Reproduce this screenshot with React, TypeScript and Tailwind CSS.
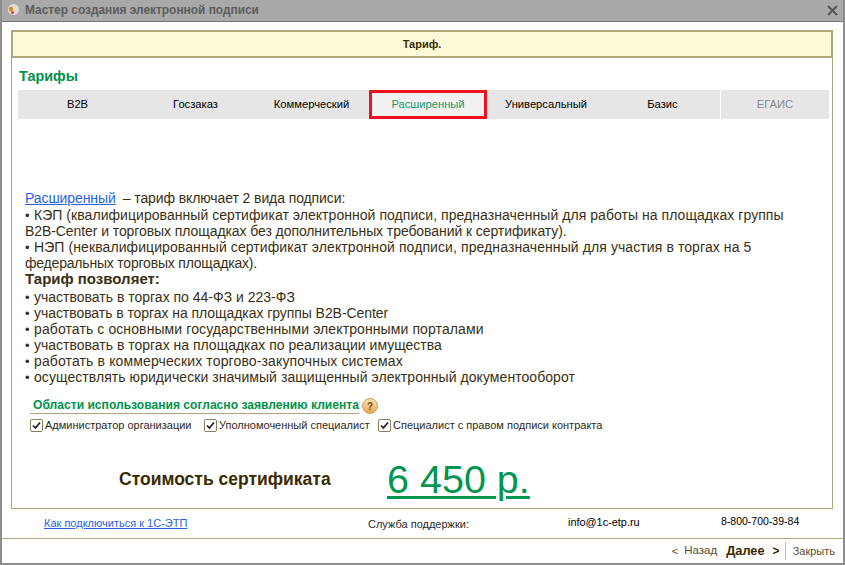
import React from "react";

const FONT = "font-['Liberation_Sans',Arial,sans-serif]";

const tabs = [
  { label: "B2B", w: "w-[119px]" },
  { label: "Госзаказ", w: "w-[117px]" },
  { label: "Коммерческий", w: "w-[115px]" },
  { label: "Расширенный", w: "w-[118px]", active: true },
  { label: "Универсальный", w: "w-[118px]" },
  { label: "Базис", w: "w-[115px]" },
  { label: "ЕГАИС", w: "w-[109px]", disabled: true },
];

const CheckItem = ({ label, w }: { label: string; w: string }) => (
  <div className={`flex items-center gap-[2px] ${w}`}>
    <span className="flex h-[13px] w-[13px] items-center justify-center rounded-[2px] border border-[#8a805c] bg-white">
      <svg width="9" height="9" viewBox="0 0 9 9">
        <path d="M1 4.5 L3.4 7 L8 1.5" fill="none" stroke="#222" strokeWidth="1.8" />
      </svg>
    </span>
    <span className="text-[11px] leading-[13px] text-[#2d2a1e]">{label}</span>
  </div>
);

const Line = ({ children, className = "", bullet }: { children: React.ReactNode; className?: string; bullet?: boolean }) => (
  <p className={className}>
    {bullet && <span className="inline-block w-[9px] text-[13px] leading-[11px]">•</span>}
    {children}
  </p>
);

const App = () => {
  return (
    <div className={`${FONT} flex h-[565px] w-[845px] flex-col overflow-hidden border-2 border-t-0 border-[#8c8c8c] bg-white`}>
      {/* title bar */}
      <div className="flex h-[22px] shrink-0 items-center justify-between border-b border-[#777] bg-[#a9a9a9] pl-[4px] pr-[5px]">
        <div className="flex items-center gap-[5px]">
          <svg width="14" height="14" viewBox="0 0 14 14">
            <circle cx="7.5" cy="6.5" r="5.5" fill="#e2ddd2" />
            <circle cx="5" cy="6" r="2.2" fill="#e08a25" />
            <circle cx="6.5" cy="9.5" r="1.5" fill="#d0452f" />
          </svg>
          <span className="text-[11.9px] font-bold text-[#5c5c5c]">Мастер создания электронной подписи</span>
        </div>
        <svg width="11" height="11" viewBox="0 0 11 11">
          <path d="M1 1 L10 10 M10 1 L1 10" stroke="#555" strokeWidth="2" />
        </svg>
      </div>

      {/* main panel */}
      <div className="ml-[9px] mr-[10px] mt-[8px] flex h-[479px] shrink-0 flex-col border border-[#b0a67c]">
        <div className="flex h-[27px] shrink-0 items-center justify-center border-x border-t border-b-2 border-[#b0a67c] bg-[#fdfad9] text-[11px] font-bold text-[#3a2a00]">
          Тариф.
        </div>

        <div className="pl-[7px] pt-[11px] text-[14.4px] font-bold leading-[15px] text-[#00924a]">Тарифы</div>

        <div className="ml-[6px] mt-[6px] flex h-[29px] w-[811px] shrink-0 bg-[#e6e6e6]">
          {tabs.map((t) => (
            <div
              key={t.label}
              className={`flex shrink-0 items-center justify-center text-[11.2px] ${t.w} ${
                t.active
                  ? "border-[3px] border-[#ee1122] bg-[#f1f1f1] text-[#1a9a70]"
                  : t.disabled
                    ? "border-l border-white text-[#8a8a8a]"
                    : "text-black"
              }`}
            >
              {t.label}
            </div>
          ))}
        </div>

        <div className="ml-[13px] mt-[71px] w-[800px] text-[14px] leading-[16px] text-[#3a2f12]">
          <p className="mb-[1px]">
            <a className="tracking-[-0.08px] text-[#2a5fe0] underline">Расширенный</a>
            <span className="ml-[7px] tracking-[-0.1px]">– тариф включает 2 вида подписи:</span>
          </p>
          <Line bullet className="tracking-[0.05px]">КЭП (квалифицированный сертификат электронной подписи, предназначенный для работы на площадках группы</Line>
          <Line className="tracking-[-0.08px]">B2B-Center и торговых площадках без дополнительных требований к сертификату).</Line>
          <Line bullet className="tracking-[0.09px]">НЭП (неквалифицированный сертификат электронной подписи, предназначенный для участия в торгах на 5</Line>
          <Line className="tracking-[-0.2px]">федеральных торговых площадках).</Line>
          <Line className="mb-[2px] text-[15px] font-bold">Тариф позволяет:</Line>
          <Line bullet>участвовать в торгах по 44-ФЗ и 223-ФЗ</Line>
          <Line bullet className="tracking-[-0.06px]">участвовать в торгах на площадках группы B2B-Center</Line>
          <Line bullet className="tracking-[0.1px]">работать с основными государственными электронными порталами</Line>
          <Line bullet>участвовать в торгах на площадках по реализации имущества</Line>
          <Line bullet className="tracking-[0.13px]">работать в коммерческих торгово-закупочных системах</Line>
          <Line bullet className="tracking-[0.06px]">осуществлять юридически значимый защищенный электронный документооборот</Line>
        </div>

        <div className="ml-[18px] mt-[13px] flex items-center gap-[3px]">
          <span className="border-b border-[#b0a67c] pl-[3px] pb-[1px] text-[12.1px] font-bold leading-[14px] text-[#00924a]">
            Области использования согласно заявлению клиента
          </span>
          <span className="flex h-[16px] w-[16px] items-center justify-center rounded-full border border-[#c9a060] bg-gradient-to-b from-[#fbe3b0] to-[#eba84a] text-[10px] font-bold text-[#7a4a18]">
            ?
          </span>
        </div>

        <div className="ml-[18px] mt-[5px] flex">
          <CheckItem label="Администратор организации" w="w-[174px]" />
          <CheckItem label="Уполномоченный специалист" w="w-[174px]" />
          <CheckItem label="Специалист с правом подписи контракта" w="w-[240px]" />
        </div>

        <div className="ml-[107px] mt-[26px] flex items-center">
          <span className="w-[268px] text-[17.5px] font-bold text-[#3a2a00]">Стоимость сертификата</span>
          <span className="text-[39.5px] leading-[42px] text-[#00964f] underline decoration-[3px] underline-offset-[3px]">6 450 р.</span>
        </div>
      </div>

      {/* support row */}
      <div className="flex h-[29px] shrink-0 items-center text-[11px]">
        <a className="ml-[42px] w-[324px] text-[#2a5fe0] underline">Как подключиться к 1С-ЭТП</a>
        <span className="w-[200px] pt-[1px] text-[#2d2a1e]">Служба поддержки:</span>
        <span className="w-[153px] pb-[3px] text-[10.9px] text-black">info@1c-etp.ru</span>
        <span className="pb-[3px] text-[10.5px] text-black">8-800-700-39-84</span>
      </div>

      {/* bottom bar */}
      <div className="flex flex-1 items-center justify-end border-t border-[#b0a67c] pr-[8px] text-[11px] text-[#5a4d2a]">
        <span className="mr-[6px]">&lt;</span>
        <span className="text-[11.5px]">Назад</span>
        <span className="ml-[9px] text-[12.8px] font-bold text-[#3a2a00]">Далее</span>
        <span className="ml-[8px] text-[12px] font-bold text-[#3a2a00]">&gt;</span>
        <span className="ml-[5px] h-[18px] border-l border-[#c9c2a0]" />
        <span className="ml-[7px]">Закрыть</span>
      </div>
    </div>
  );
};

export default App;
